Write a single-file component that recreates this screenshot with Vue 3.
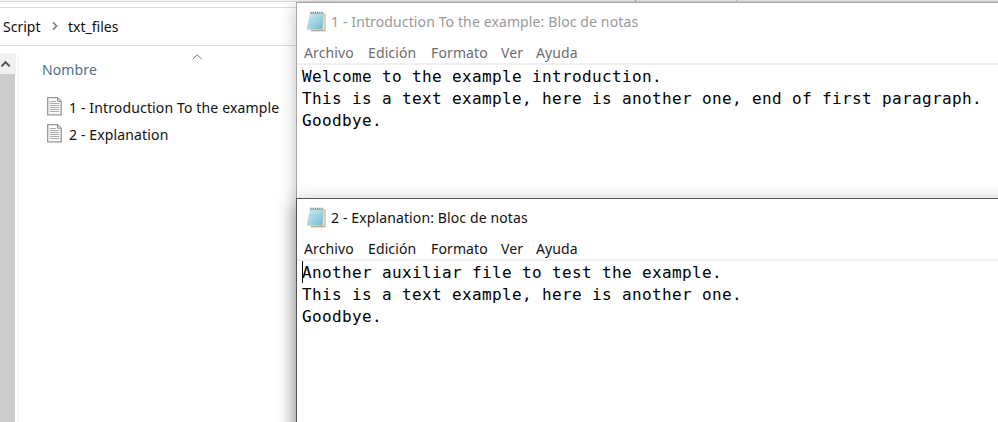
<script setup>
const menu = [
  { label: 'Archivo', cls: 'm1' },
  { label: 'Edición', cls: 'm2' },
  { label: 'Formato', cls: 'm3' },
  { label: 'Ver', cls: 'm4' },
  { label: 'Ayuda', cls: 'm5' },
]
const files = ['1 - Introduction To the example', '2 - Explanation']
const windows = [
  {
    id: 'intro',
    title: '1 - Introduction To the example: Bloc de notas',
    active: false,
    lines: [
      'Welcome to the example introduction.',
      'This is a text example, here is another one, end of first paragraph.',
      'Goodbye.',
    ],
  },
  {
    id: 'expl',
    title: '2 - Explanation: Bloc de notas',
    active: true,
    lines: [
      'Another auxiliar file to test the example.',
      'This is a text example, here is another one.',
      'Goodbye.',
    ],
  },
]
</script>

<template>
  <div class="desktop">
    <section class="explorer">
      <div class="ribbon"><div class="ribbon-part"></div><div class="ribbon-part mid"></div><div class="ribbon-part last"></div></div>
      <div class="gap"></div>
      <div class="address">
        <span class="crumb c1">Script</span>
        <svg class="chev" width="6" height="10" viewBox="0 0 6 10"><path d="M1 1.2 4.6 5 1 8.8" fill="none" stroke="#7a7a7a" stroke-width="1.6" /></svg>
        <span class="crumb c2">txt_files</span>
      </div>
      <div class="main">
        <div class="scrollbar">
          <div class="up"><svg width="12" height="10" viewBox="0 0 12 10"><path d="M1.4 7.4 5.6 3.2 9.8 7.4" fill="none" stroke="#555" stroke-width="2" /></svg></div>
        </div>
        <div class="list">
          <svg class="sort" width="11" height="6" viewBox="0 0 11 6"><path d="M.7 5.2 5.2.8 9.7 5.2" fill="none" stroke="#777" /></svg>
          <div class="column">Nombre</div>
          <div v-for="f in files" :key="f" class="file">
            <svg width="15" height="19" viewBox="0 0 15 19">
              <path d="M.7.7H10.5L14.2 4.2V17.8H.7Z" fill="#fbfbfb" stroke="#979797" stroke-width="1.3" />
              <path d="M10.5.9V4.3H14" fill="#ddd" stroke="#979797" />
              <path d="M2.5 4.5H9M2.5 6.5H12.3M2.5 8.5H12.3M2.5 10.5H12.3M2.5 12.5H12.3M2.5 14.5H12.3" stroke="#adadad" />
            </svg>
            <span>{{ f }}</span>
          </div>
        </div>
      </div>
    </section>

    <section v-for="w in windows" :key="w.id" class="window" :class="[w.id, { active: w.active }]">
      <header class="title">
        <svg class="pad" width="21" height="21" viewBox="0 0 21 21">
          <defs>
            <linearGradient :id="'g-' + w.id" x1="0" y1="0" x2="1" y2="1">
              <stop offset="0" stop-color="#c9ebf2" /><stop offset=".5" stop-color="#a5d8e5" /><stop offset="1" stop-color="#6fb3c6" />
            </linearGradient>
          </defs>
          <path d="M17.6 2.5H19.4V20.2H5V18.7H17.2Z" fill="#a8966d" />
          <path d="M16.8 2.2H18.7V19.3H3.8V18H16Z" fill="#ece4cb" />
          <path d="M4 1.8H17.7L16.5 18.5H.7Z" :fill="`url(#g-${w.id})`" />
          <path d="M4 1.8H17.7V3.2H3.8Z" fill="#b9cbd0" />
          <path d="M2.8 8H17M2.5 11H16.8M2 14H16.5" stroke="#8dc8d6" stroke-width=".6" opacity=".6" />
          <path d="M5 .7V2.6M7.2.7V2.6M9.4.7V2.6M11.6.7V2.6M13.8.7V2.6M16 .7V2.6" stroke="#66777c" stroke-width="1" />
        </svg>
        <span class="caption">{{ w.title }}</span>
      </header>
      <nav class="menu"><span v-for="m in menu" :key="m.label" :class="m.cls">{{ m.label }}</span></nav>
      <div class="text">
        <i v-if="w.active" class="caret"></i>
        <div v-for="l in w.lines" :key="l" class="line">{{ l }}</div>
      </div>
    </section>
  </div>
</template>

<style>
body { margin: 0; overflow: hidden; }
</style>

<style scoped>
.desktop { position: relative; width: 998px; height: 422px; overflow: hidden; background: #fff; font-family: "Noto Sans", "Open Sans", sans-serif; font-size: 14px; line-height: 20px; color: #111; white-space: nowrap; }
.explorer { display: flex; flex-direction: column; height: 422px; }
.ribbon { display: flex; height: 2px; box-sizing: border-box; background: #f5f5f5; border-bottom: 1px solid #d9d9d9; }
.ribbon-part { width: 635px; border-right: 1px solid #888; }
.ribbon-part.mid { width: 100px; border-color: #bbb; background: #efefef; }
.ribbon-part.last { flex: 1; border: 0; background: #efefef; }
.gap { height: 5px; border-bottom: 1px solid #d9d9d9; }
.address { display: flex; align-items: center; height: 37px; border-bottom: 1px solid #d9d9d9; padding-left: 3px; }
.chev { margin: 0 0 2px 11px; }
.c1 { width: 38px; }
.c2 { margin-left: 10px; }
.main { display: flex; flex: 1; padding-top: 7px; }
.scrollbar { width: 15px; background: #cdcdcd; margin-right: 3px; }
.up { height: 21px; background: #f0f0f0; width: 16px; display: flex; align-items: center; }
.list { border-left: 1px solid #f3f3f3; flex: 1; padding-left: 23px; }
.sort { display: block; margin: 1px 0 0 150px; }
.column { color: #526e8e; margin: 0 0 14px; letter-spacing: .12px; }
.file { display: flex; align-items: center; height: 27px; padding-left: 5px; gap: 7px; letter-spacing: .14px; }
.file svg { margin-bottom: 2px; }
.window { position: absolute; left: 296px; width: 720px; background: #fff; border: 1px solid #a6a6a6; box-sizing: border-box; box-shadow: 0 3px 16px rgba(0, 0, 0, .26); }
.intro { top: 2px; height: 480px; }
.expl { top: 198px; height: 260px; border-color: #555; box-shadow: 0 5px 18px rgba(0, 0, 0, .34); }
.title { display: flex; align-items: center; height: 38px; padding-left: 9px; color: #999; }
.pad { margin-bottom: 2px; }
.active .title { color: #111; }
.caption { margin-left: 4px; letter-spacing: .12px; }
.menu { display: flex; box-sizing: border-box; height: 24px; padding: 2px 0 0 7px; border-bottom: 2px solid #f0f0f0; color: #6d6d6d; letter-spacing: .12px; }
.active .menu { color: #111; }
.m1 { width: 64px; }
.m2 { width: 63px; }
.m3 { width: 70px; }
.m4 { width: 35px; }
.text { position: relative; padding: 1px 0 0 5px; font-family: "DejaVu Sans Mono", monospace; font-size: 16px; letter-spacing: .368px; line-height: 22px; color: #000; }
.caret { position: absolute; left: 5px; top: 0; width: 1px; height: 22px; background: #000; }
</style>
